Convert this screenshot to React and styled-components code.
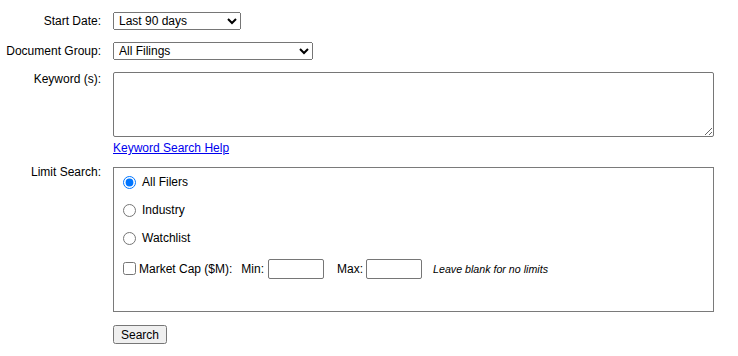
import React from "react";
import styled, { createGlobalStyle } from "styled-components";

const Global = createGlobalStyle`
  html, body { margin: 0; padding: 0; background: #fff; }
  body { font-family: "Liberation Sans", Arial, sans-serif; font-size: 12px; color: #000; }
`;

const Form = styled.form`
  width: 714px;
  padding-top: 12px;
  display: flex;
  flex-direction: column;
`;

const Row = styled.div`
  display: grid;
  grid-template-columns: 101px 601px;
  column-gap: 12px;
  align-items: ${(p) => (p.$top ? "start" : "center")};
  margin-top: ${(p) => p.$mt || 0}px;
`;

const Label = styled.div`
  text-align: right;
  line-height: 14px;
  margin-top: ${(p) => p.$offset || 0}px;
`;

const Field = styled.div`
  display: flex;
  align-items: center;
`;

const Select = styled.select`
  font-family: "Liberation Sans", Arial, sans-serif;
  font-size: 12px;
  width: ${(p) => p.$w}px;
  height: 18px;
  margin: 0;
  padding: 0 1px;
  color: #000;
`;

const TextArea = styled.textarea`
  box-sizing: border-box;
  width: 601px;
  height: 65px;
  margin: 0;
  border: 1px solid #767676;
  border-radius: 2px;
  font-family: "Liberation Mono", monospace;
  font-size: 12px;
`;

const HelpLink = styled.a`
  color: #0000ee;
  text-decoration: underline;
  line-height: 14px;
`;

const Box = styled.div`
  box-sizing: border-box;
  width: 601px;
  height: 145px;
  border: 1px solid #7a7a7a;
  padding-left: 4px;
  display: flex;
  flex-direction: column;
`;

const OptionRow = styled.label`
  display: flex;
  align-items: center;
  height: 28px;
  line-height: 14px;
`;

const Radio = styled.input.attrs({ type: "radio" })`
  width: 13px;
  height: 13px;
  margin: 0 6px 0 5px;
`;

const CapRow = styled.div`
  display: flex;
  align-items: center;
  height: 33px;
  line-height: 14px;
`;

const Check = styled.input.attrs({ type: "checkbox" })`
  width: 13px;
  height: 13px;
  margin: 0 3px 0 5px;
`;

const Caption = styled.span`
  margin-left: ${(p) => p.$ml || 0}px;
  margin-right: ${(p) => p.$mr || 0}px;
`;

const SmallInput = styled.input.attrs({ type: "text" })`
  box-sizing: border-box;
  width: 56px;
  height: 20px;
  margin: 0;
  border: 1px solid #767676;
  border-radius: 2px;
  padding: 1px 2px;
  font-family: "Liberation Sans", Arial, sans-serif;
  font-size: 12px;
`;

const Hint = styled.span`
  font-style: italic;
  font-size: 10.67px;
  margin-left: 11px;
`;

const Button = styled.button`
  font-family: "Liberation Sans", Arial, sans-serif;
  font-size: 12px;
  height: 19px;
  width: 54px;
  padding: 0 6px;
  margin: 0;
  color: #000;
`;

export default function App() {
  return (
    <>
      <Global />
      <Form onSubmit={(e) => e.preventDefault()}>
        <Row>
          <Label>Start Date:</Label>
          <Field>
            <Select $w={128} defaultValue="90">
              <option value="90">Last 90 days</option>
            </Select>
          </Field>
        </Row>

        <Row $mt={12}>
          <Label>Document Group:</Label>
          <Field>
            <Select $w={200} defaultValue="all">
              <option value="all">All Filings</option>
            </Select>
          </Field>
        </Row>

        <Row $top $mt={12}>
          <Label>Keyword (s):</Label>
          <Field>
            <TextArea />
          </Field>
        </Row>

        <Row $top $mt={4}>
          <div />
          <Field>
            <HelpLink href="#">Keyword Search Help</HelpLink>
          </Field>
        </Row>

        <Row $top $mt={12}>
          <Label $offset={-2}>Limit Search:</Label>
          <Field>
            <Box>
              <OptionRow>
                <Radio name="limit" defaultChecked />
                All Filers
              </OptionRow>
              <OptionRow>
                <Radio name="limit" />
                Industry
              </OptionRow>
              <OptionRow>
                <Radio name="limit" />
                Watchlist
              </OptionRow>
              <CapRow>
                <Check />
                <Caption $mr={9}>Market Cap ($M):</Caption>
                <Caption $mr={4}>Min:</Caption>
                <SmallInput />
                <Caption $ml={13} $mr={3}>Max:</Caption>
                <SmallInput />
                <Hint>Leave blank for no limits</Hint>
              </CapRow>
            </Box>
          </Field>
        </Row>

        <Row $mt={13}>
          <div />
          <Field>
            <Button type="submit">Search</Button>
          </Field>
        </Row>
      </Form>
    </>
  );
}
